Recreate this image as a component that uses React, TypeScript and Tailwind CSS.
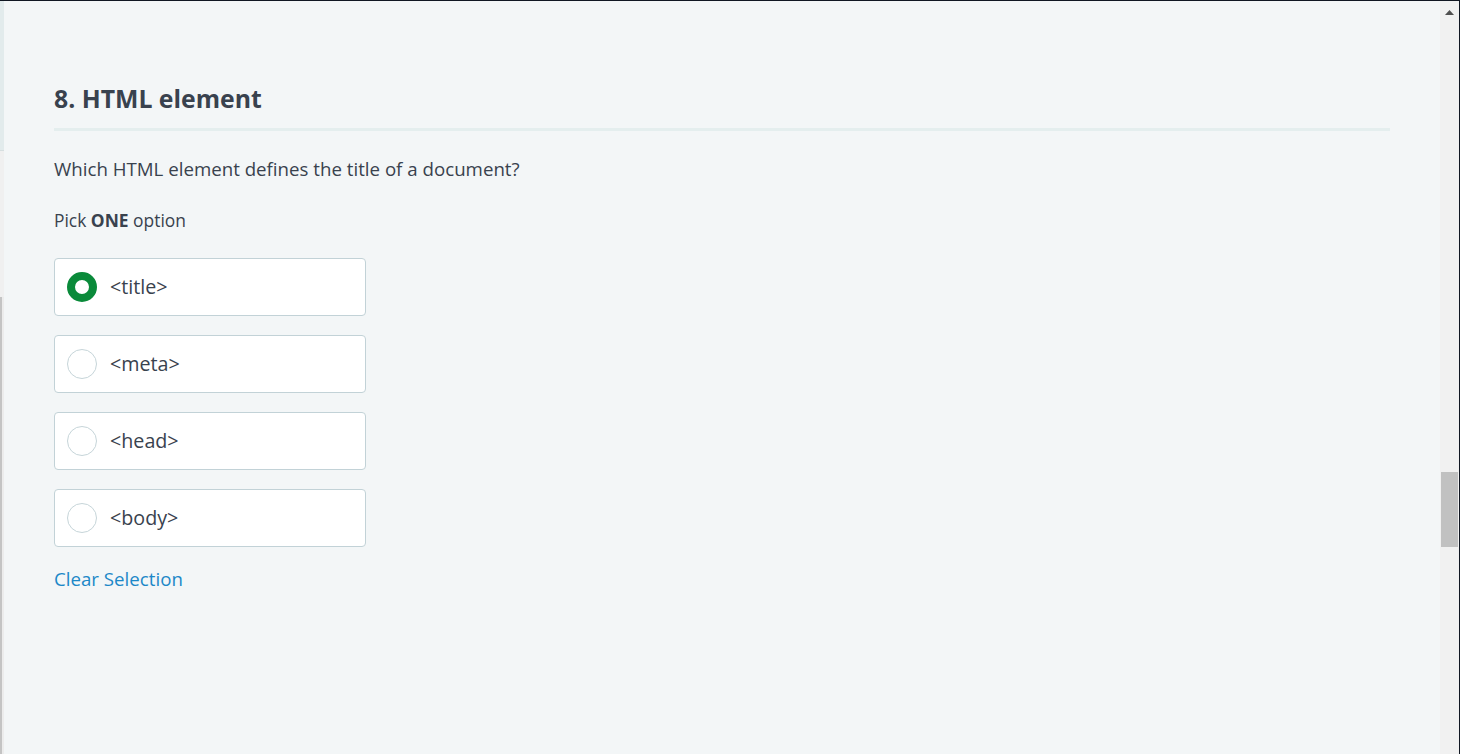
import React from "react";

const options = ["<title>", "<meta>", "<head>", "<body>"];

export default function App() {
  const font = { fontFamily: '"Open Sans", "Noto Sans", sans-serif' };
  return (
    <div className="w-[1460px] h-[754px] flex flex-col overflow-hidden bg-[#f3f6f7]" style={font}>
      <div className="h-px w-full bg-[#111722] shrink-0" />
      <div className="flex flex-1 min-h-0">
        {/* left strip */}
        <div className="w-[4px] flex flex-col shrink-0">
          <div className="h-[150px] bg-[#e2ebec] border-b border-[#d6dfe0]" />
          <div className="h-[146px] bg-[#f0f0f0]" />
          <div className="flex-1 flex">
            <div className="w-[2px] bg-[#c4c4c4]" />
            <div className="flex-1 bg-[#ececec]" />
          </div>
        </div>
        {/* content */}
        <div className="flex-1 px-[50px] pt-[81px]">
          <div className="border-b-[3px] border-[#e4eeee] pb-[14px]">
            <h1 className="text-[24.8px] leading-[32px] font-bold text-[#39424e]">8. HTML element</h1>
          </div>
          <p className="mt-[26px] text-[18.7px] leading-[24px] text-[#39424e]">
            Which HTML element defines the title of a document?
          </p>
          <p className="mt-[28px] text-[17.4px] leading-[22px] text-[#39424e]">
            Pick <span className="font-bold">ONE</span> option
          </p>
          <div className="mt-[27px] flex flex-col gap-[19px]">
            {options.map((o, i) => (
              <div
                key={o}
                className="w-[312px] h-[58px] bg-white border border-[#c2d2d7] rounded-[4px] flex items-center pl-[12px] gap-[13px]"
              >
                {i === 0 ? (
                  <div className="w-[30px] h-[30px] rounded-full border-[8px] border-[#0a8a3a] bg-white shrink-0" />
                ) : (
                  <div className="w-[30px] h-[30px] rounded-full border border-[#c6d5d9] bg-white shrink-0" />
                )}
                <span className="text-[19.7px] leading-[24px] text-[#39424e]">{o}</span>
              </div>
            ))}
          </div>
          <div className="mt-[20px] text-[18.7px] leading-[24px] text-[#1c88c8]">Clear Selection</div>
        </div>
        {/* scrollbar */}
        <div className="w-[20px] flex shrink-0">
          <div className="w-[19px] bg-[#f1f1f1] flex flex-col items-center pt-[9px]">
            <svg width="9" height="5" viewBox="0 0 9 5">
              <polygon points="4.5,0 9,5 0,5" fill="#505050" />
            </svg>
            <div className="mt-[457px] w-[17px] h-[75px] bg-[#c1c1c1]" />
          </div>
          <div className="w-px bg-[#111722]" />
        </div>
      </div>
    </div>
  );
}
